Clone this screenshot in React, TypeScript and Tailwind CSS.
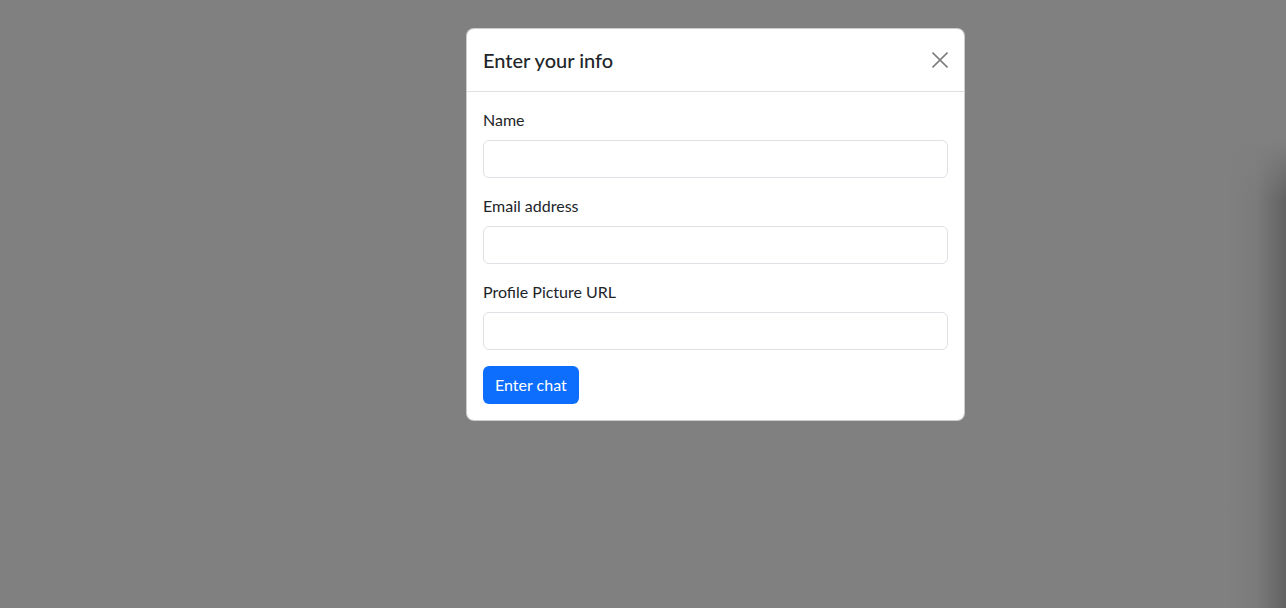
import React from "react";

const font = { fontFamily: "Lato, 'Noto Sans', sans-serif" };

function Field({ label }: { label: string }) {
  return (
    <div className="mb-4">
      <label className="mb-2 block text-[16px] leading-[24px] text-[#212529]">{label}</label>
      <input
        type="text"
        className="block h-[38px] w-full rounded-[6px] border border-[#dee2e6] bg-white px-3 text-[16px] outline-none"
      />
    </div>
  );
}

export default function App() {
  return (
    <div className="relative h-[608px] w-[1286px] overflow-hidden bg-[#808080]" style={font}>
      <div className="pointer-events-none absolute right-0 top-[140px] h-[468px] w-[60px] bg-gradient-to-r from-transparent via-[#7b7b7b] to-[#626262]" />
      <div className="pointer-events-none absolute right-0 top-[140px] h-[60px] w-[60px] bg-gradient-to-b from-[#808080] to-transparent" />
      <div className="flex pt-[28px] pl-[466px]">
        <div className="w-[499px] rounded-[8px] border border-black/20 bg-white">
          <div className="flex h-[63px] items-center justify-between border-b border-[#dee2e6] px-4">
            <h5 className="text-[20px] font-medium leading-[30px] text-[#212529]">Enter your info</h5>
            <button className="flex h-[16px] w-[16px] items-center justify-center">
              <svg width="16" height="16" viewBox="0 0 16 16" fill="none" stroke="#7f7f7f" strokeWidth="1.6">
                <path d="M0.5 0.5L15.5 15.5M15.5 0.5L0.5 15.5" />
              </svg>
            </button>
          </div>
          <div className="p-4">
            <Field label="Name" />
            <Field label="Email address" />
            <Field label="Profile Picture URL" />
            <button className="h-[38px] rounded-[6px] bg-[#0d6efd] px-3 text-[16px] leading-[24px] text-white">
              Enter chat
            </button>
          </div>
        </div>
      </div>
    </div>
  );
}
